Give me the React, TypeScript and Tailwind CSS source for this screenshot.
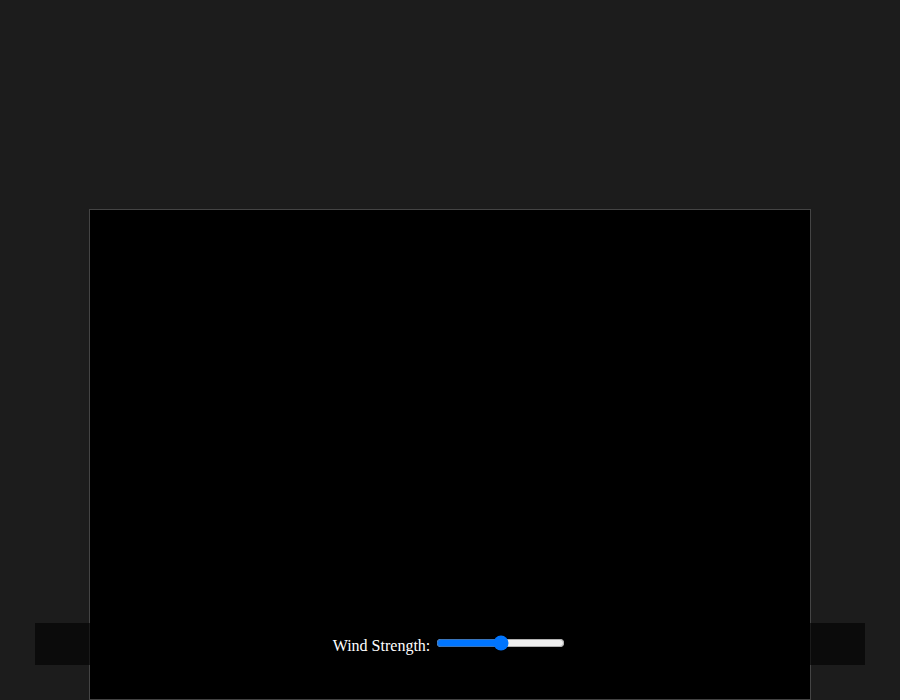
import React from "react";

const App = () => {
  return (
    <div className="relative h-[700px] overflow-hidden bg-[#1c1c1c] font-['Liberation_Serif',serif]">
      {/* CANVAS  */}
      <div className="mx-auto pt-[209px] w-[722px]">
        <div className="h-[491px] border border-[#444] bg-black" />
      </div>
      {/* CONTROLS  */}
      <div className="absolute left-[35px] right-[35px] bottom-[35px] h-[42px] bg-black/60 flex items-center justify-center text-white text-base">
        <div className="pt-[2px]">
          <label>
            Wind Strength: <input type="range" min={0} max={100} defaultValue={50} className="m-[2px]" />
          </label>
        </div>
      </div>
    </div>
  );
};

export default App;
